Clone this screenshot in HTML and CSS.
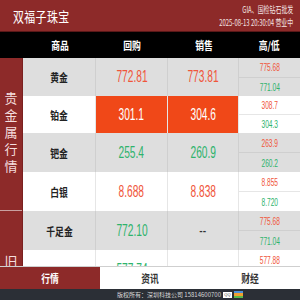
FILE: index.html
```html
<!DOCTYPE html>
<html lang="zh">
<head>
<meta charset="utf-8">
<link rel="stylesheet" href="styles.css">
</head>
<body>
<div class="app">
  <header class="header">
    <span class="title">双福子珠宝</span>
    <div class="info">
      <span class="sq-r">GIA、国检钻石批发</span>
      <span class="sq-r">2025-08-13 20:30:04 营业中</span>
    </div>
  </header>
  <div class="thead">
    <span></span>
    <span class="th"><span class="sq">商品</span></span>
    <span class="th"><span class="sq">回购</span></span>
    <span class="th"><span class="sq">销售</span></span>
    <span class="th"><span class="sq">高/低</span></span>
  </div>
  <div class="body">
    <div class="side">
      <div class="group g1"><span class="vtext">贵金属行情</span></div>
      <div class="group g2"><span class="vtext">旧料回收</span></div>
    </div>
    <div class="rows">
      <div class="row grey h38">
        <div class="name"><span class="sq">黄金</span></div>
        <div class="num up"><span class="big">772.81</span></div>
        <div class="num up"><span class="big">773.81</span></div>
        <div class="hl"><span class="up"><span class="small">775.68</span></span><span class="down"><span class="small">771.04</span></span></div>
      </div>
      <div class="row white h37">
        <div class="name"><span class="sq">铂金</span></div>
        <div class="num hot"><span class="big">301.1</span></div>
        <div class="num hot"><span class="big">304.6</span></div>
        <div class="hl"><span class="up"><span class="small">308.7</span></span><span class="down"><span class="small">304.3</span></span></div>
      </div>
      <div class="row grey">
        <div class="name"><span class="sq">钯金</span></div>
        <div class="num down"><span class="big">255.4</span></div>
        <div class="num down"><span class="big">260.9</span></div>
        <div class="hl"><span class="up"><span class="small">263.9</span></span><span class="down"><span class="small">260.2</span></span></div>
      </div>
      <div class="row white">
        <div class="name"><span class="sq">白银</span></div>
        <div class="num up"><span class="big">8.688</span></div>
        <div class="num up"><span class="big">8.838</span></div>
        <div class="hl"><span class="up"><span class="small">8.855</span></span><span class="down"><span class="small">8.720</span></span></div>
      </div>
      <div class="row grey">
        <div class="name"><span class="sq">千足金</span></div>
        <div class="num down"><span class="big">772.10</span></div>
        <div class="num dash"><span class="big">--</span></div>
        <div class="hl"><span class="up"><span class="small">775.68</span></span><span class="down"><span class="small">771.04</span></span></div>
      </div>
      <div class="row white">
        <div class="name"></div>
        <div class="num down"><span class="big">577.74</span></div>
        <div class="num dash"></div>
        <div class="hl"><span class="up"><span class="small">577.88</span></span><span class="down"><span class="small">575.20</span></span></div>
      </div>
    </div>
  </div>
  <nav class="tabs">
    <span class="tab active"><span class="sq">行情</span></span>
    <span class="tab"><span class="sq">资讯</span></span>
    <span class="tab"><span class="sq">财经</span></span>
  </nav>
  <footer class="footer">
    <span class="ftext">版权所有：深圳科技公司 15814600700</span>
    <span class="qq">QQ</span>
    <span class="ficon"><i class="b"></i><i class="o"></i><i class="g"></i></span>
  </footer>
</div>
</body>
</html>
```

FILE: styles.css
```css
* { box-sizing: border-box; margin: 0; padding: 0; }
html, body { width: 300px; height: 300px; overflow: hidden; }
body { font-family: "Noto Sans CJK SC", "Liberation Sans", sans-serif; background: #fff; }

.app { width: 300px; height: 300px; display: flex; flex-direction: column; }

.sq { display: inline-block; transform: scaleX(0.8); }
.sq-r { display: block; transform: scaleX(0.66); transform-origin: right center; white-space: nowrap; line-height: 13px; }

.header {
  height: 32px;
  flex: none;
  background: #8d2a29;
  color: #fff;
  display: flex;
  align-items: center;
  justify-content: space-between;
  padding: 0 7px 0 13px;
  border-bottom: 1px solid #5a1818;
}
.title { display: inline-block; font-size: 14px; transform: scaleX(0.78); transform-origin: left center; white-space: nowrap; letter-spacing: 0.5px; }
.info { display: flex; flex-direction: column; align-items: flex-end; font-size: 9px; color: #f3e4e4; padding-top: 1px; }

.thead {
  height: 26px;
  flex: none;
  background: #000;
  color: #fff;
  display: grid;
  grid-template-columns: 23px 73px 72px 71px 1fr;
  align-items: center;
  font-size: 11px;
  font-weight: bold;
}
.th { text-align: center; }

.body { height: 208px; flex: none; display: flex; overflow: hidden; }
.side { width: 23px; flex: none; background: #8d2a29; display: flex; flex-direction: column; border-right: 1px solid #7a2020; }
.group { display: flex; align-items: center; justify-content: center; flex: none; }
.g1 { height: 153px; border-bottom: 1px solid #c9a0a0; }
.g2 { height: 156px; }
.vtext { writing-mode: vertical-rl; color: #f5dede; font-size: 13px; letter-spacing: 4px; line-height: 1; }

.rows { flex: 1; display: flex; flex-direction: column; }
.row { display: grid; grid-template-columns: 73px 72px 71px 1fr; height: 39px; flex: none; }
.row.h38 { height: 38px; }
.row.h37 { height: 37px; }
.grey { background: #dedede; }
.white { background: #fff; }
.row > div { border-right: 1px solid #cfcfcf; display: flex; align-items: center; justify-content: center; }
.row > div:last-child { border-right: 0; }
.white > div { border-right-color: #e6e6e6; }

.name { font-size: 11px; color: #222; font-weight: bold; }
.num { font-family: "Liberation Sans", Arial, sans-serif; font-size: 17px; }
.big { display: inline-block; transform: scaleX(0.6); }
.up { color: #f0553a; }
.down { color: #2eb36c; }
.dash { color: #333; }
.hot { background: #f04818; color: #fff; }

.hl { flex-direction: column; align-items: stretch !important; font-family: "Liberation Sans", Arial, sans-serif; font-size: 11px; }
.hl > span { flex: 1; display: flex; align-items: center; justify-content: center; }
.hl > span:first-child { border-bottom: 1px solid #cfcfcf; }
.white .hl > span:first-child { border-bottom-color: #e6e6e6; }
.row.white .hl { background: #fff; }
.small { display: inline-block; transform: scaleX(0.6); }

.tabs {
  height: 23px;
  flex: none;
  border-top: 1px solid #cfcfcf;
  display: grid;
  grid-template-columns: 100px 100px 100px;
  background: #fff;
  font-size: 11px;
  font-weight: bold;
}
.tab { display: flex; align-items: center; justify-content: center; color: #333; }
.tab.active { background: #8d2a29; color: #fff; }

.footer {
  height: 11px;
  flex: none;
  background: #2b2f36;
  display: flex;
  align-items: center;
  justify-content: center;
  gap: 2px;
  padding-left: 60px;
}
.ftext { font-size: 6px; color: #d8d8d8; white-space: nowrap; line-height: 1; }
.qq { width: 9px; height: 6px; background: #fff; color: #333; font-size: 4px; line-height: 6px; text-align: center; font-family: "Liberation Sans", sans-serif; flex: none; }
.ficon { width: 9px; height: 7px; display: flex; flex-direction: column; flex: none; }
.ficon i { flex: 1; display: block; }
.ficon .b { background: #4a90d9; }
.ficon .o { background: #f0a030; }
.ficon .g { background: #59b84a; }
```
